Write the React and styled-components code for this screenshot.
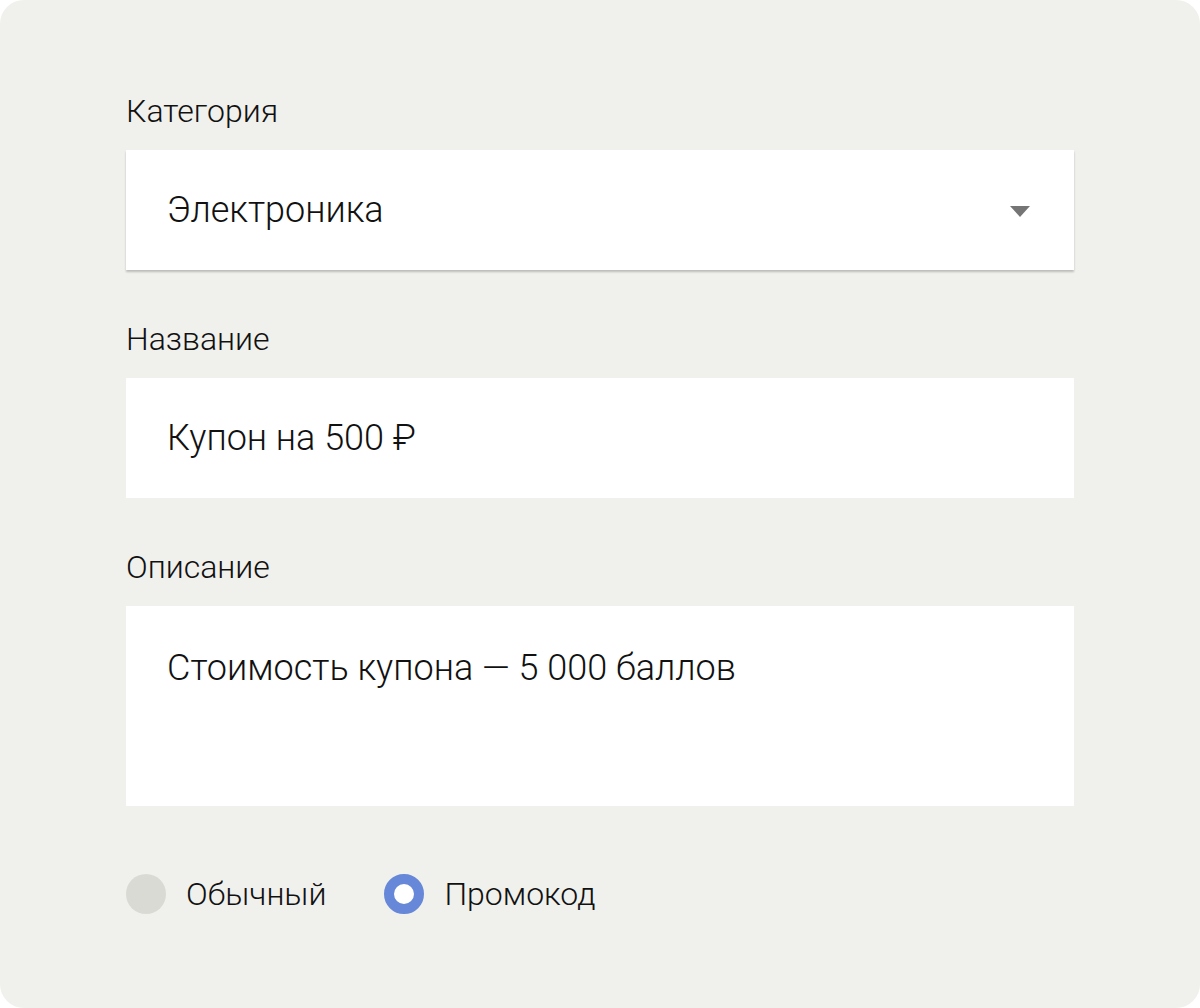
import React, { useState } from "react";
import styled, { createGlobalStyle } from "styled-components";

const GlobalStyle = createGlobalStyle`
  html, body {
    margin: 0;
    padding: 0;
    background: #ffffff;
  }
  body {
    font-family: Roboto, "Noto Sans", Arial, sans-serif;
    color: #111111;
  }
`;

const Card = styled.div`
  box-sizing: border-box;
  width: 1200px;
  height: 1008px;
  background: #f0f0ec;
  border-radius: 24px;
  padding: 93px 126px 0;
  display: flex;
  flex-direction: column;
`;

const Field = styled.div`
  display: flex;
  flex-direction: column;
  margin-bottom: 51px;
`;

const Label = styled.div`
  font-size: 32px;
  line-height: 36px;
  font-weight: 300;
  margin-bottom: 21px;
`;

const Box = styled.div`
  box-sizing: border-box;
  background: #ffffff;
  height: ${(p) => p.$height || 120}px;
  padding: ${(p) => (p.$multiline ? "40px 44px 0 41px" : "0 44px 0 41px")};
  display: flex;
  align-items: ${(p) => (p.$multiline ? "flex-start" : "center")};
  justify-content: space-between;
  font-size: 36px;
  line-height: 44px;
  font-weight: 300;
  box-shadow: ${(p) => (p.$raised ? "0 2px 2px rgba(0, 0, 0, 0.22)" : "none")};
`;

const Arrow = styled.span`
  width: 0;
  height: 0;
  border-left: 10px solid transparent;
  border-right: 10px solid transparent;
  border-top: 11px solid #757575;
  margin-top: 2px;
`;

const RadioRow = styled.div`
  display: flex;
  align-items: center;
  gap: 58px;
  margin-top: 17px;
`;

const RadioItem = styled.label`
  display: flex;
  align-items: center;
  gap: 20px;
  font-size: 32px;
  line-height: 40px;
  font-weight: 300;
  cursor: pointer;
`;

const Dot = styled.span`
  box-sizing: border-box;
  width: 40px;
  height: 40px;
  border-radius: 50%;
  background: ${(p) => (p.$checked ? "#ffffff" : "#dadad5")};
  border: ${(p) => (p.$checked ? "10px solid #6788d8" : "none")};
`;

export default function App() {
  const [kind, setKind] = useState("promo");
  return (
    <>
      <GlobalStyle />
      <Card>
        <Field>
          <Label>Категория</Label>
          <Box $raised>
            <span>Электроника</span>
            <Arrow />
          </Box>
        </Field>
        <Field>
          <Label>Название</Label>
          <Box>
            <span>Купон на 500 ₽</span>
          </Box>
        </Field>
        <Field>
          <Label>Описание</Label>
          <Box $height={200} $multiline>
            <span>Стоимость купона — 5 000 баллов</span>
          </Box>
        </Field>
        <RadioRow>
          <RadioItem onClick={() => setKind("plain")}>
            <Dot $checked={kind === "plain"} />
            Обычный
          </RadioItem>
          <RadioItem onClick={() => setKind("promo")}>
            <Dot $checked={kind === "promo"} />
            Промокод
          </RadioItem>
        </RadioRow>
      </Card>
    </>
  );
}
